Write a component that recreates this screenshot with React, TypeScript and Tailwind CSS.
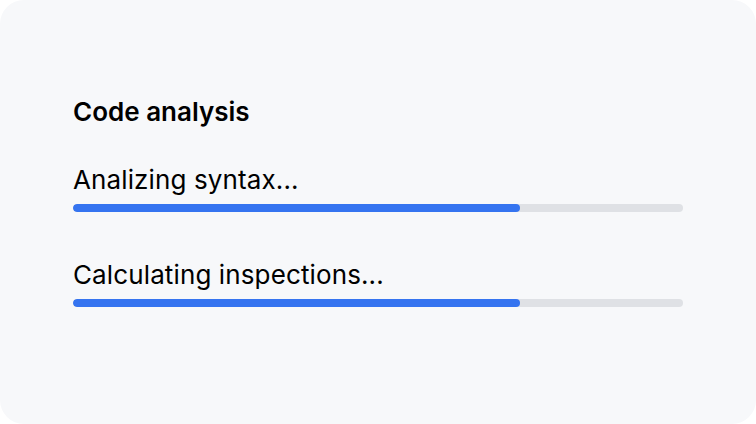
export default function App() {
  const tasks = [
    { label: "Analizing syntax...", progress: 73.2 },
    { label: "Calculating inspections...", progress: 73.2 },
  ];

  return (
    <div className="w-[756px] h-[424px] bg-white">
      <div
        className="w-full h-full rounded-3xl bg-[#f7f8fa] pl-[73px] pr-[73px] pt-[96px] text-[#000000]"
        style={{ fontFamily: "Inter, 'Noto Sans', sans-serif" }}
      >
        <h2 className="text-[26px] leading-[32px] font-semibold">Code analysis</h2>

        <div className="mt-[36px] flex flex-col gap-[47px]">
          {tasks.map((t) => (
            <div key={t.label}>
              <div className="text-[26px] leading-[32px] tracking-[0.12px]">{t.label}</div>
              <div className="mt-[8px] h-2 w-full rounded-full bg-[#dfe1e5] overflow-hidden">
                <div
                  className="h-full rounded-full bg-[#3574f0]"
                  style={{ width: `${t.progress}%` }}
                />
              </div>
            </div>
          ))}
        </div>
      </div>
    </div>
  );
}
